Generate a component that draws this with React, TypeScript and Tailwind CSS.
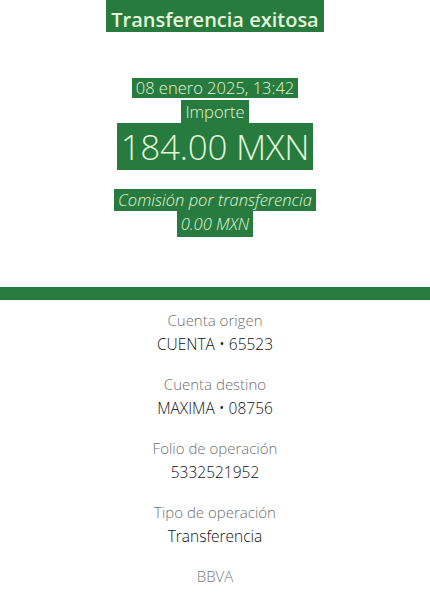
import React from 'react';

const details = [
  { label: 'Cuenta origen', value: 'CUENTA • 65523' },
  { label: 'Cuenta destino', value: 'MAXIMA • 08756' },
  { label: 'Folio de operación', value: '5332521952' },
  { label: 'Tipo de operación', value: 'Transferencia' },
];

function Mark({ className = '', children }: { className?: string; children: React.ReactNode }) {
  return <span className={`bg-[#287b3e] text-[#e2f6da] px-1 ${className}`}>{children}</span>;
}

export default function App() {
  return (
    <div className="w-[430px] h-[597px] bg-white overflow-hidden font-['Open_Sans','Liberation_Sans',sans-serif]">
      <section className="flex flex-col items-center text-center">
        <Mark className="inline-block text-[20px] font-semibold leading-[24px] pt-[8px] px-[5px]">Transferencia exitosa</Mark>
        <div className="mt-[46px] flex flex-col items-center">
          <Mark className="text-[16.5px] font-light leading-[20px] px-[4px]">08 enero 2025, 13:42</Mark>
          <div className="mt-[2px]">
            <Mark className="text-[16.5px] font-light leading-[21px]">Importe</Mark>
          </div>
          <div className="mt-[1px]">
            <Mark className="text-[35px] font-light leading-[44px] px-[4px] tracking-[-0.3px]">184.00 MXN</Mark>
          </div>
          <div className="mt-[20px] flex flex-col items-center">
            <Mark className="text-[16.5px] font-light italic leading-[22px]">Comisión por transferencia</Mark>
            <Mark className="text-[16.5px] font-light italic leading-[26px]">0.00 MXN</Mark>
          </div>
        </div>
      </section>

      <div className="mt-[50px] h-[13px] bg-[#2a7b3f]" />

      <section className="pt-[8px] flex flex-col items-center gap-[16px] text-[15px] leading-[24px]">
        {details.map((d) => (
          <div key={d.label} className="flex flex-col items-center">
            <span className="text-[#6f6f6f] font-light">{d.label}</span>
            <span className="text-[15.5px] text-[#111111] font-light">{d.value}</span>
          </div>
        ))}
        <span className="text-[#7a7a7a] font-light">BBVA</span>
      </section>
    </div>
  );
}
